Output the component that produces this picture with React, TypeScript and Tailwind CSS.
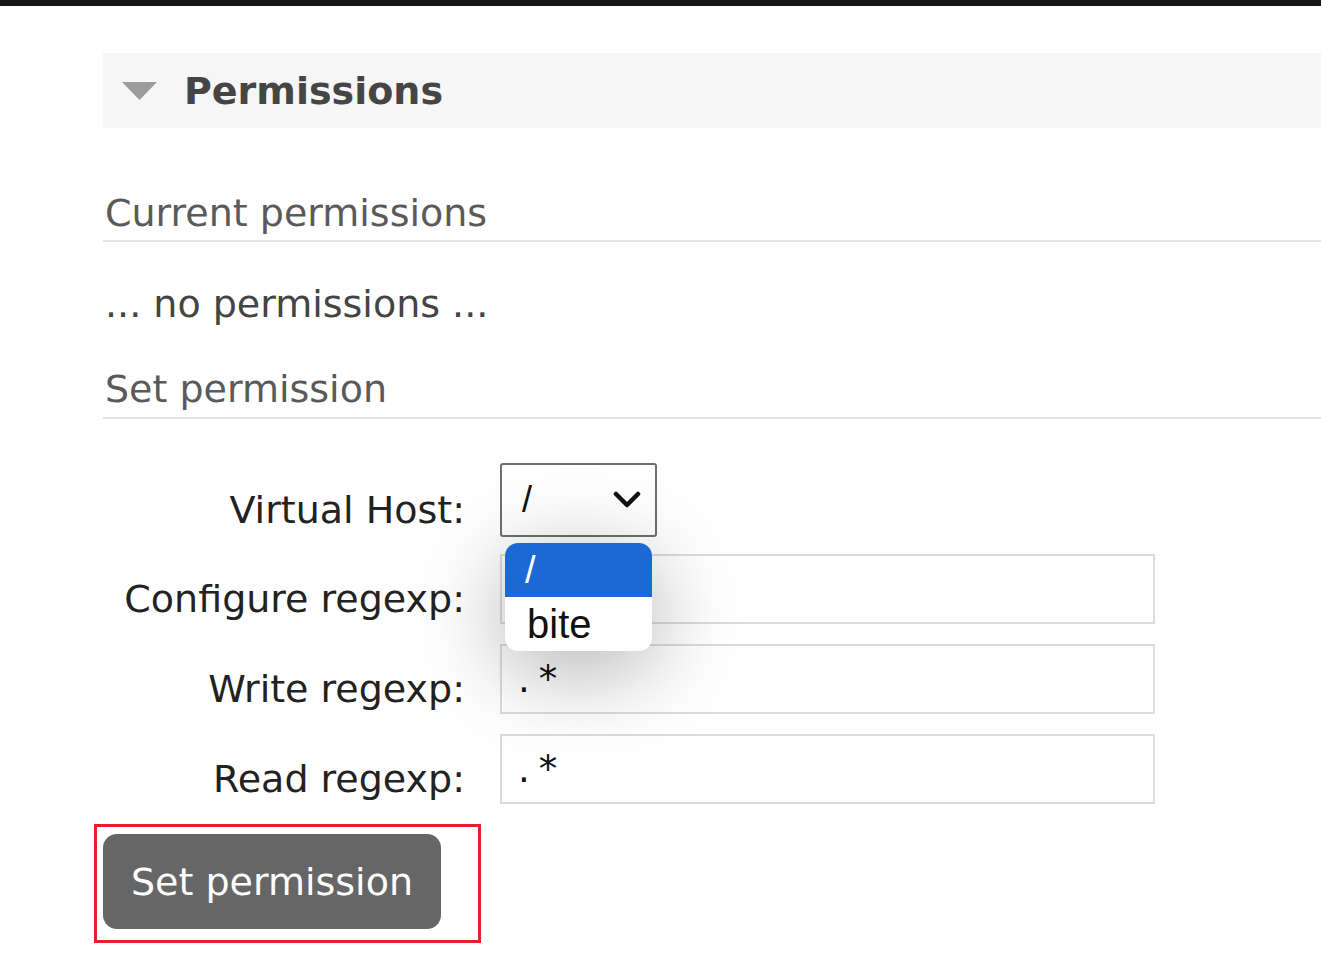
const font = { fontFamily: '"DejaVu Sans", Verdana, sans-serif' };
const systemFont = { fontFamily: '"Liberation Sans", Arial, sans-serif' };

function FormRow({ label, children, className = '' }: { label: string; children: React.ReactNode; className?: string }) {
  return (
    <div className={`flex flex-row items-center ${className}`}>
      <label className="w-[397px] shrink-0 whitespace-nowrap pr-[35px] pt-[20px] text-right text-[#222]">{label}</label>
      {children}
    </div>
  );
}

function RegexInput({ value = '' }: { value?: string }) {
  return (
    <div className="flex h-[70px] w-[655px] items-center border-2 border-[#dcdcdc] bg-white pl-[16px] text-[37px] tracking-[9px] text-[#111]">
      {value}
    </div>
  );
}

export default function App() {
  return (
    <div className="min-h-[953px] w-[1321px] overflow-hidden bg-white text-[38px] leading-none" style={font}>
      <div className="h-[6px] bg-[#141414]" />

      <div className="pl-[103px] pt-[47px]">
        {/* collapsible section header */}
        <div className="flex h-[75px] flex-row items-center bg-[#f6f6f6]">
          <svg width="35" height="18" viewBox="0 0 35 18" className="ml-[19px]">
            <polygon points="0,0 35,0 17.5,18" fill="#9c9c9c" />
          </svg>
          <h2 className="ml-[27px] font-bold text-[#454545]">Permissions</h2>
        </div>

        <h3 className="mt-[66px] border-b-2 border-[#e2e2e2] pb-[8px] pl-[2px] text-[#5a5a5a]">Current permissions</h3>
        <p className="mt-[43px] pl-[2px] text-[#444]">... no permissions ...</p>
        <h3 className="mt-[47px] border-b-2 border-[#e2e2e2] pb-[9px] pl-[2px] text-[#5a5a5a]">Set permission</h3>

        <div className="mt-[44px] flex flex-col">
          <FormRow label="Virtual Host:">
            <div className="relative">
              <div className="flex h-[74px] w-[157px] flex-row items-center justify-between rounded-[3px] border-2 border-[#6f6f6f] bg-white pl-[20px] pr-[14px]">
                <span className="text-[36px] text-[#111]" style={systemFont}>/</span>
                <svg width="28" height="18" viewBox="0 0 28 18">
                  <polyline points="3,3 14,14 25,3" fill="none" stroke="#111" strokeWidth="4.5" strokeLinecap="round" strokeLinejoin="round" />
                </svg>
              </div>
              {/* open native list */}
              <div
                className="absolute left-[5px] top-[80px] z-10 w-[147px] overflow-hidden rounded-[13px] bg-white shadow-[0_18px_90px_rgba(0,0,0,0.32)]"
                style={systemFont}
              >
                <div className="flex h-[54px] items-center bg-[#1b69d3] pl-[20px] text-[38px] text-white">/</div>
                <div className="flex h-[54px] items-center pl-[22px] text-[40px] text-[#111]">bite</div>
              </div>
            </div>
          </FormRow>
          <FormRow label="Configure regexp:" className="mt-[17px]">
            <RegexInput />
          </FormRow>
          <FormRow label="Write regexp:" className="mt-[20px]">
            <RegexInput value=".*" />
          </FormRow>
          <FormRow label="Read regexp:" className="mt-[20px]">
            <RegexInput value=".*" />
          </FormRow>
        </div>

        <div className="ml-[-9px] mt-[20px] inline-flex border-[3px] border-[#e3202c] pb-[11px] pl-[6px] pr-[37px] pt-[7px]">
          <button className="h-[95px] w-[338px] rounded-[14px] bg-[#666] text-[38px] text-white">Set permission</button>
        </div>
      </div>
    </div>
  );
}
